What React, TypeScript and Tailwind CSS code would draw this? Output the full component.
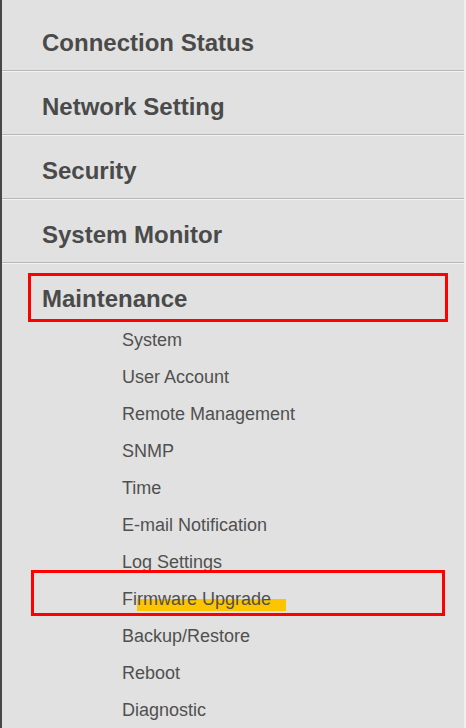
import React from "react";

const sections = ["Connection Status", "Network Setting", "Security", "System Monitor"];

const maintenanceItems = [
  "System",
  "User Account",
  "Remote Management",
  "SNMP",
  "Time",
  "E-mail Notification",
  "Log Settings",
  "Firmware Upgrade",
  "Backup/Restore",
  "Reboot",
  "Diagnostic",
];

export default function App() {
  return (
    <div
      className="flex w-[466px] h-[728px] overflow-hidden"
      style={{ fontFamily: '"Liberation Sans", Arial, sans-serif' }}
    >
      {/* dark frame edge */}
      <div className="w-[2px] bg-[#474747]" />

      <nav className="flex-1 bg-[#e1e1e1] pt-[7px]">
        {sections.map((name) => (
          <div
            key={name}
            className="h-[64px] box-border border-b border-[#b6b6b6] shadow-[0_1px_0_#f2f2f2] pl-[40px] pt-[22px]"
          >
            <span className="block text-[24px] leading-[28px] font-bold text-[#4a4a4a]">
              {name}
            </span>
          </div>
        ))}

        {/* open section */}
        <div className="relative pl-[40px] pt-[22px] pb-[9px]">
          <span className="block text-[24px] leading-[28px] font-bold text-[#4a4a4a]">
            Maintenance
          </span>
          <div className="absolute left-[26px] top-[10px] w-[420px] h-[49px] border-[3px] border-[#ff0000]" />
        </div>

        <ul>
          {maintenanceItems.map((item) => {
            const current = item === "Firmware Upgrade";
            return (
              <li
                key={item}
                className="relative pl-[120px] text-[18px] leading-[37px] text-[#505050]"
              >
                {current && (
                  <>
                    <span className="absolute left-[135px] top-[18px] w-[149px] h-[12px] bg-[#ffc400]" />
                    <span className="absolute left-[29px] top-[-11px] w-[414px] h-[46px] border-[3px] border-[#ff0000]" />
                  </>
                )}
                <span className="relative">{item}</span>
              </li>
            );
          })}
        </ul>
      </nav>

      <div className="w-[2px] bg-[#efefef]" />
    </div>
  );
}
